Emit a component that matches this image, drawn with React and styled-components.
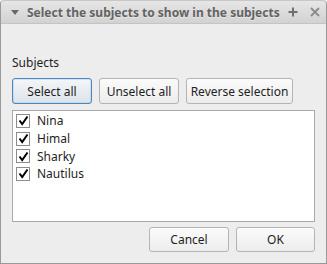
import React, { useState } from 'react';
import styled, { createGlobalStyle } from 'styled-components';

const GlobalStyle = createGlobalStyle`
  html, body {
    margin: 0;
    padding: 0;
    background: #ffffff;
  }
  body {
    font-family: "Noto Sans", "Open Sans", sans-serif;
  }
`;

const subjects = ['Nina', 'Himal', 'Sharky', 'Nautilus'];

const App = () => {
  const [checked, setChecked] = useState(subjects.map(() => true));

  const toggle = (i) => {
    setChecked(checked.map((c, j) => (j === i ? !c : c)));
  };

  return (
    <>
      <GlobalStyle />
      <Window>
        <TitleBar>
          <MenuArrow width="8" height="5" viewBox="0 0 8 5">
            <path d="M0 0 L8 0 L4 5 Z" fill="#6a6a6a" />
          </MenuArrow>
          <Title>Select the subjects to show in the subjects</Title>
          <TitleIcon $gap={8}>
            <svg width="10" height="10" viewBox="0 0 10 10">
              <path d="M5 0.5 V9.5 M0.5 5 H9.5" stroke="#707070" strokeWidth="2" />
            </svg>
          </TitleIcon>
          <TitleIcon $gap={12}>
            <svg width="10" height="10" viewBox="0 0 10 10">
              <path d="M1 1 L9 9 M9 1 L1 9" stroke="#8a8a8a" strokeWidth="1.8" />
            </svg>
          </TitleIcon>
        </TitleBar>
        <Body>
          <Label>Subjects</Label>
          <ButtonRow>
            <Button $default $w={80} onClick={() => setChecked(subjects.map(() => true))}>Select all</Button>
            <Button $w={80} onClick={() => setChecked(subjects.map(() => false))}>Unselect all</Button>
            <Button $w={107} onClick={() => setChecked(checked.map((c) => !c))}>Reverse selection</Button>
          </ButtonRow>
          <List>
            {subjects.map((s, i) => (
              <Row key={s} onClick={() => toggle(i)}>
                <Box>
                  {checked[i] && (
                    <svg width="11" height="11" viewBox="0 0 11 11">
                      <path d="M1.5 5.5 L4.2 9 L9.5 1.5" stroke="#000" strokeWidth="2" fill="none" />
                    </svg>
                  )}
                </Box>
                {s}
              </Row>
            ))}
          </List>
          <Footer>
            <Button $w={80} $h={25}>Cancel</Button>
            <Button $w={79} $h={25}>OK</Button>
          </Footer>
        </Body>
      </Window>
    </>
  );
};

export default App;

const Window = styled.div`
  width: 327px;
  height: 264px;
  box-sizing: border-box;
  border: 1px solid #999999;
  border-top: none;
  border-radius: 4px 4px 0 0;
  background: #ededed;
  display: flex;
  flex-direction: column;
  overflow: hidden;
`;

const TitleBar = styled.div`
  height: 24px;
  flex: none;
  box-sizing: border-box;
  display: flex;
  align-items: center;
  padding: 0 11px 0 10px;
  background: linear-gradient(#e6e6e6, #d2d2d2);
  border-bottom: 1px solid #c4c4c4;
  border-top: 1px solid #c8c8c8;
  border-radius: 4px 4px 0 0;
`;

const MenuArrow = styled.svg`
  flex: none;
  margin-top: 1px;
`;

const Title = styled.div`
  font-size: 12px;
  font-weight: bold;
  color: #636363;
  margin-left: 8px;
  flex: 1;
  white-space: nowrap;
  text-shadow: 0 1px 0 rgba(255, 255, 255, 0.4);
`;

const TitleIcon = styled.div`
  flex: none;
  width: 10px;
  height: 10px;
  display: flex;
  margin-left: ${(p) => p.$gap}px;
`;

const Body = styled.div`
  flex: 1;
  display: flex;
  flex-direction: column;
  padding: 30px 11px 11px 11px;
`;

const Label = styled.div`
  font-size: 12px;
  color: #1e1e1e;
  line-height: 17px;
  margin-bottom: 7px;
`;

const ButtonRow = styled.div`
  display: flex;
  gap: 7px;
  margin-bottom: 6px;
`;

const Button = styled.button`
  font-family: inherit;
  font-size: 12px;
  color: #1e1e1e;
  white-space: nowrap;
  width: ${(p) => p.$w}px;
  height: ${(p) => p.$h || 26}px;
  padding: 0;
  border-radius: 3px;
  border: 1px solid ${(p) => (p.$default ? '#4a86c0' : '#b4b4b4')};
  background: ${(p) =>
    p.$default
      ? 'linear-gradient(#f4f6f8, #dde3e9)'
      : 'linear-gradient(#fbfbfb, #ececec)'};
  box-shadow: ${(p) => (p.$default ? 'inset 0 0 0 1px rgba(120,170,220,0.25)' : 'none')};
  cursor: pointer;
`;

const List = styled.div`
  height: 112px;
  box-sizing: border-box;
  border: 1px solid #aaaaaa;
  background: #ffffff;
  padding: 1px 0 0 3px;
`;

const Row = styled.div`
  display: flex;
  align-items: center;
  height: 17.7px;
  font-size: 12px;
  color: #1e1e1e;
  cursor: pointer;
`;

const Box = styled.div`
  width: 12px;
  height: 12px;
  border: 1px solid #8c8c8c;
  background: #fff;
  margin-right: 7px;
  display: flex;
  align-items: center;
  justify-content: center;
`;

const Footer = styled.div`
  margin-top: auto;
  display: flex;
  justify-content: flex-end;
  gap: 7px;
`;
